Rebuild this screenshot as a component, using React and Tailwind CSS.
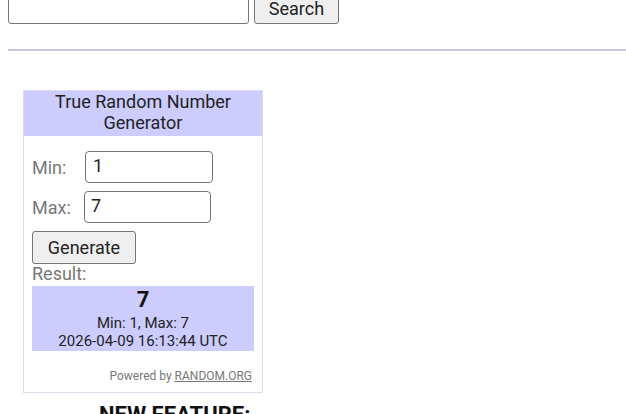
export default function App() {
  return (
    <div className="w-[626px] h-[414px] overflow-hidden bg-white pl-2 font-['Roboto',sans-serif] text-[#222]">
      {/* search */}
      <div className="flex gap-[5px] mt-[-8px]">
        <input className="w-[241px] h-[32px] border border-[#767676] rounded-[3px] px-2 text-[18px] outline-none" />
        <button className="w-[85px] h-[32px] border border-[#767676] rounded-[3px] bg-[#efefef] text-[18px] leading-none pt-[1px]">
          Search
        </button>
      </div>

      <div className="mt-[25px] h-[2px] bg-[#c8c8e4]" />

      {/* widget */}
      <div className="ml-[15px] mt-[39px] w-[240px] h-[303px] border border-[#dcdcea] flex flex-col">
        <div className="h-[45px] bg-[#ccccff] text-center text-[18px] leading-[21px] pt-0">
          True Random Number
          <br />
          Generator
        </div>
        <div className="px-[8px] pt-[15px] flex flex-col">
          <div className="flex items-center">
            <span className="w-[53px] text-[18px] text-[#777]">Min:</span>
            <div className="w-[128px] h-[32px] border border-[#767676] rounded-[4px] px-[7px] text-[18px] leading-[28px]">
              1
            </div>
          </div>
          <div className="flex items-center mt-[8px]">
            <span className="w-[52px] text-[18px] text-[#777]">Max:</span>
            <div className="w-[127px] h-[32px] border border-[#767676] rounded-[4px] px-[6px] text-[18px] leading-[28px]">
              7
            </div>
          </div>
          <button className="mt-[8px] w-[104px] h-[33px] border border-[#767676] rounded-[3px] bg-[#efefef] text-[18px] leading-none">
            Generate
          </button>
          <div className="text-[18px] text-[#777] leading-[20px]">Result:</div>
          <div className="mt-[2px] h-[65px] bg-[#ccccff] flex flex-col items-center text-[15px] leading-[18px]">
            <div className="text-[22px] font-bold leading-[24px] mt-[2px] text-[#111]">7</div>
            <div className="mt-[2px]">Min: 1, Max: 7</div>
            <div>2026-04-09 16:13:44 UTC</div>
          </div>
          <div className="mt-[16px] text-right text-[12px] text-[#777] pr-[2px]">
            Powered by <span className="underline">RANDOM.ORG</span>
          </div>
        </div>
      </div>

      <div className="ml-[91px] mt-[9px] text-[22px] font-bold leading-[26px] text-[#111]">
        NEW FEATURE:
      </div>
    </div>
  );
}
